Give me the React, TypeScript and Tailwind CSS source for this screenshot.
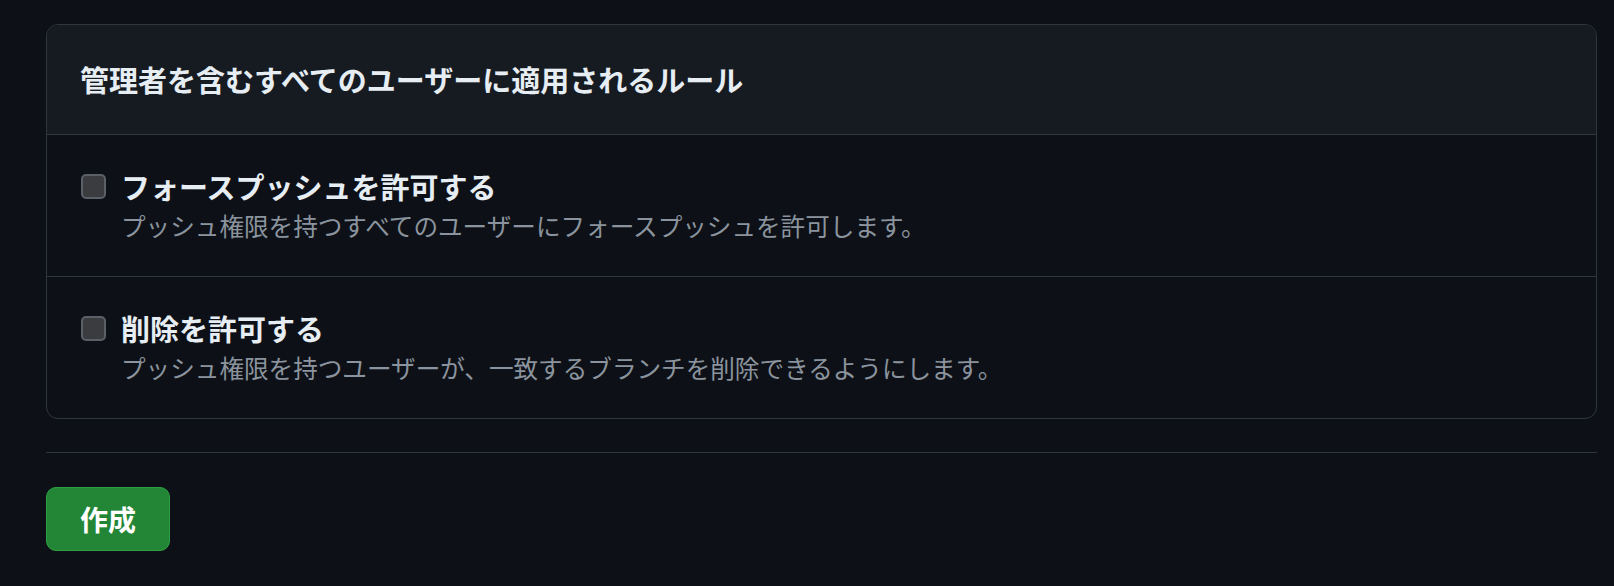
import { useState } from "react";

const rules = [
  {
    id: "force-push",
    label: "フォースプッシュを許可する",
    help: "プッシュ権限を持つすべてのユーザーにフォースプッシュを許可します。",
  },
  {
    id: "deletions",
    label: "削除を許可する",
    help: "プッシュ権限を持つユーザーが、一致するブランチを削除できるようにします。",
  },
];

function RuleRow({ label, help, last }: { label: string; help: string; last: boolean }) {
  const [checked, setChecked] = useState(false);
  return (
    <label
      className={
        last
          ? "flex items-start gap-[15px] py-[32px] pl-[34px] pr-6 cursor-pointer"
          : "flex items-start gap-[15px] border-b border-[#30363d] py-[32px] pl-[34px] pr-6 cursor-pointer"
      }
    >
      <span className="flex h-[39px] items-center">
        <input
          type="checkbox"
          checked={checked}
          onChange={() => setChecked(!checked)}
          className="h-[25px] w-[25px] appearance-none rounded-[5px] border-2 border-[#5b6068] bg-[#3a3c40] checked:bg-[#1f6feb]"
        />
      </span>
      <span className="flex flex-col">
        <span className="text-[29px] font-bold leading-[39px] text-[#e6edf3]">{label}</span>
        <span className="text-[24.6px] leading-[38px] text-[#8b949e]">{help}</span>
      </span>
    </label>
  );
}

export default function App() {
  return (
    <div className="min-h-[586px] bg-[#0d1117] pl-[46px] pr-[17px] pt-[24px] font-['Noto_Sans_CJK_JP','Noto_Sans',sans-serif]">
      <div className="overflow-hidden rounded-[12px] border border-[#30363d]">
        <div className="border-b border-[#30363d] bg-[#161b22] py-[33px] pl-[33px]">
          <h2 className="text-[29px] font-semibold leading-[43px] text-[#e6edf3]">
            管理者を含むすべてのユーザーに適用されるルール
          </h2>
        </div>
        {rules.map((r, i) => (
          <RuleRow key={r.id} label={r.label} help={r.help} last={i === rules.length - 1} />
        ))}
      </div>

      <div className="mt-[33px] border-t border-[#30363d]" />

      <button className="mt-[34px] flex h-[64px] w-[124px] items-center justify-center rounded-[10px] border border-[#2ea043] bg-[#238636] text-[28px] font-semibold text-white">
        作成
      </button>
    </div>
  );
}
